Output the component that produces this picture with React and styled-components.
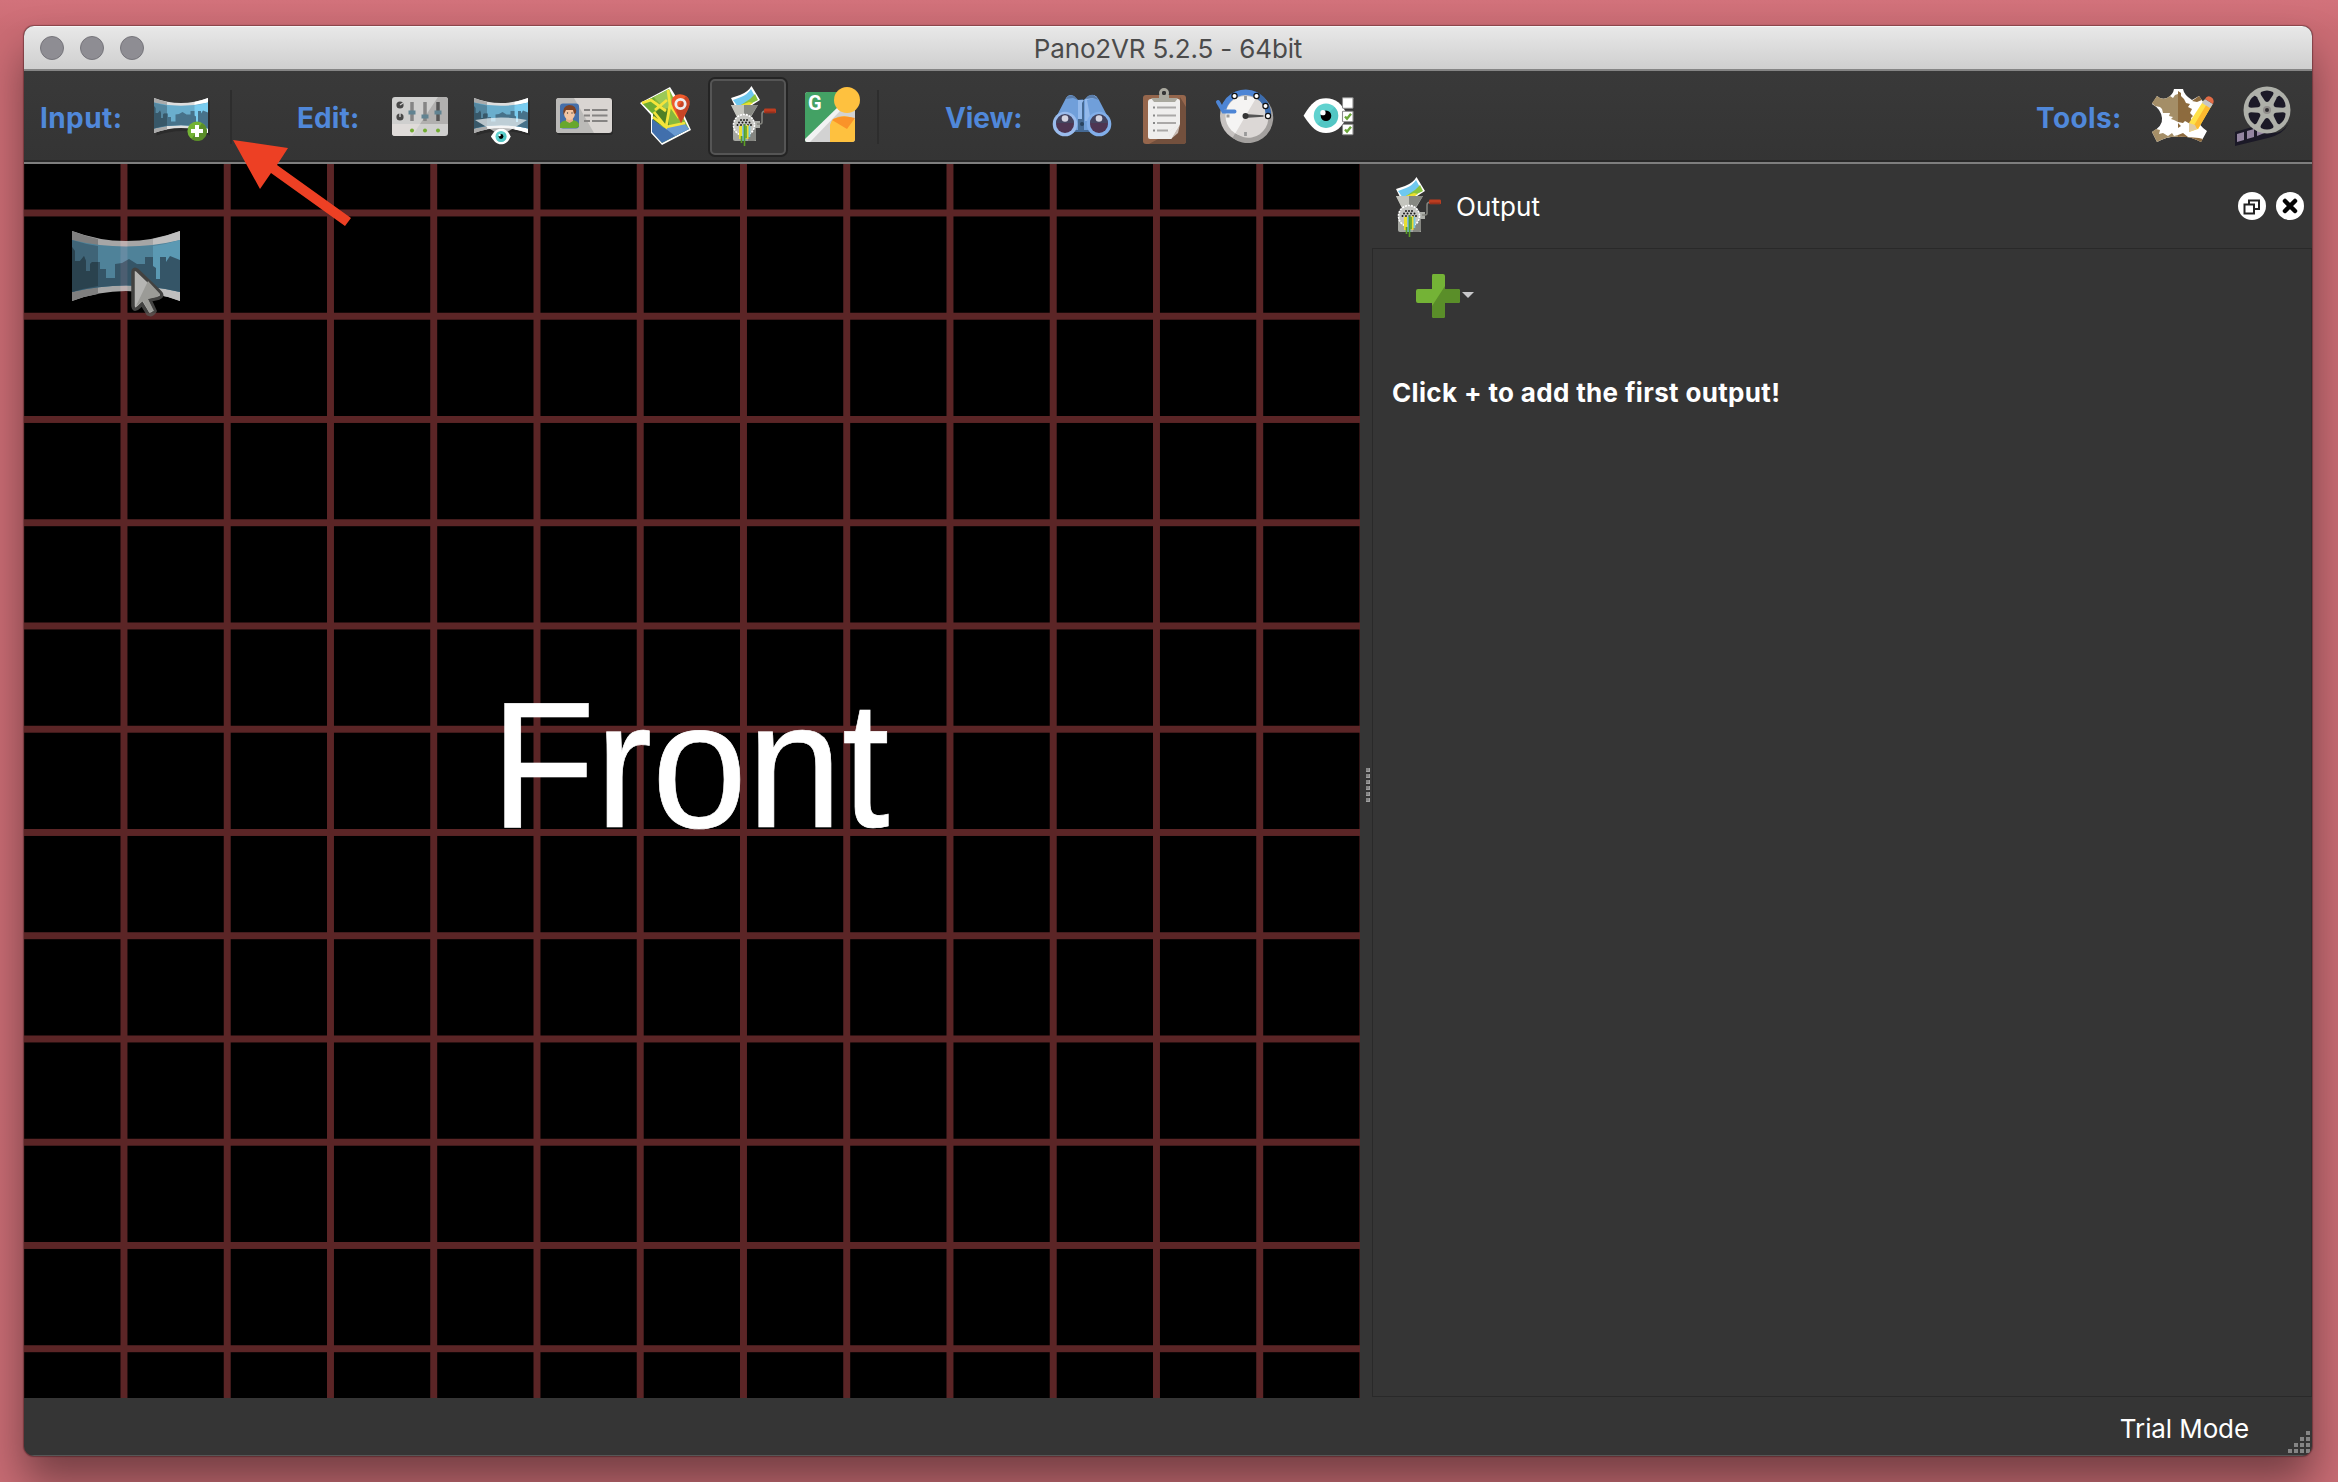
import React from "react";
import styled, { createGlobalStyle } from "styled-components";

const Global = createGlobalStyle`
  * { box-sizing: border-box; }
  body { margin: 0; }
`;

const Desktop = styled.main`
  width: 2338px;
  height: 1482px;
  padding: 26px 26px 26px 24px;
  overflow: hidden;
  background: linear-gradient(180deg, #d2727b 0, #cb6c74 30px, #c86c74 100%);
  font-family: Inter, "Liberation Sans", sans-serif;
  color: #fff;
`;

const Window = styled.div`
  width: 2288px;
  height: 1430px;
  display: flex;
  flex-direction: column;
  overflow: hidden;
  border-radius: 10px;
  background: #353535;
  box-shadow: 0 0 1px 1px rgba(60, 20, 25, 0.45), 0 26px 44px rgba(0, 0, 0, 0.42);
`;

const TitleBar = styled.header`
  height: 45px;
  flex: none;
  display: grid;
  grid-template-columns: 200px 1fr 200px;
  align-items: center;
  background: linear-gradient(#e8e8e8, #cfcfcf);
  border-top: 1px solid #f6f6f6;
  border-bottom: 2px solid #858585;
`;

const Lights = styled.div`
  display: flex;
  gap: 16px;
  padding-left: 16px;
`;

const Light = styled.span`
  width: 24px;
  height: 24px;
  border-radius: 50%;
  background: #8e8d93;
  border: 1px solid #76757b;
`;

const Title = styled.h1`
  margin: 0;
  padding-top: 2px;
  text-align: center;
  font-size: 26px;
  line-height: 32px;
  font-weight: 400;
  letter-spacing: -0.15px;
  color: #4b4b4b;
`;

const Toolbar = styled.nav`
  height: 93px;
  flex: none;
  display: flex;
  align-items: center;
  padding-right: 4px;
  background: linear-gradient(#393939, #343434);
  border-bottom: 2px solid #7e7e7e;
  box-shadow: inset 0 -2px 0 #282828;
`;

const Section = styled.div`
  width: ${(p) => p.$width}px;
  padding-left: ${(p) => p.$pad}px;
  display: flex;
  align-items: center;
`;

const Label = styled.span`
  width: ${(p) => p.$width}px;
  flex: none;
  color: #5088da;
  font-size: 28px;
  font-weight: 700;
  line-height: 34px;
  letter-spacing: ${(p) => p.$track || 0}px;
  padding-top: 3px;
`;

const Tool = styled.button`
  width: 76px;
  height: 76px;
  flex: none;
  margin-right: ${(p) => (p.$tight ? 0 : 6)}px;
  padding: 0 0 4px;
  display: grid;
  place-items: center;
  border-radius: 5px;
  background: ${(p) => (p.$active ? "#393939" : "transparent")};
  border: 2px solid ${(p) => (p.$active ? "#555" : "transparent")};
  box-shadow: ${(p) => (p.$active ? "0 0 0 2px #242424" : "none")};
`;

const Divider = styled.span`
  width: 2px;
  height: 54px;
  background: #2d2d2d;
`;

const Spacer = styled.div`
  flex: 1;
`;

const Body = styled.div`
  height: 1234px;
  flex: none;
  display: flex;
`;

const Viewer = styled.section`
  width: 1336px;
  flex: none;
  position: relative;
  display: flex;
  justify-content: center;
  background-color: #000;
  background-image: linear-gradient(90deg, #5b2526 7px, transparent 7px),
    linear-gradient(#5b2526 7px, transparent 7px);
  background-size: 103.25px 103.25px;
  background-position: 96.5px 45.5px;
`;

const Face = styled.div`
  padding: 501px 3px 0 0;
  font: 400 180px/200px "Liberation Sans", Arial, sans-serif;
  -webkit-text-stroke: 0.7px #fff;
  transform: scaleX(0.949);
  color: #fff;
`;

const PanoCursor = styled.div`
  position: absolute;
  left: 47px;
  top: 66px;
  opacity: 0.75;
`;

const Splitter = styled.div`
  width: 12px;
  flex: none;
  display: flex;
  flex-direction: column;
  justify-content: center;
  align-items: flex-end;
  gap: 2px;
  padding: 8px 2px 0 0;
`;

const SplitDot = styled.span`
  width: 4px;
  height: 4px;
  background: #858585;
  border-right: 1px solid #a0a0a0;
  border-bottom: 1px solid #a0a0a0;
`;

const Panel = styled.aside`
  flex: 1;
  display: flex;
  flex-direction: column;
`;

const PanelHead = styled.div`
  height: 84px;
  flex: none;
  display: flex;
  align-items: center;
  padding: 0 8px 0 9px;
`;

const PanelTitle = styled.h2`
  flex: 1;
  margin: 0 0 0 11px;
  font-size: 26px;
  font-weight: 400;
  letter-spacing: 0.1px;
`;

const RoundButtons = styled.div`
  display: flex;
  gap: 10px;
`;

const PanelBody = styled.div`
  flex: 1;
  margin-bottom: 1px;
  border: 1px solid #292929;
  border-right-color: #2d2d2d;
`;

const AddRow = styled.div`
  display: flex;
  align-items: center;
  gap: 2px;
  padding: 25px 0 0 43px;
`;

const Hint = styled.p`
  margin: 58px 0 0 19px;
  font-size: 26px;
  line-height: 34px;
  font-weight: 700;
  letter-spacing: 0.34px;
`;

const Status = styled.footer`
  flex: 1;
  display: flex;
  justify-content: flex-end;
  align-items: center;
  border-bottom: 1px solid #565656;
`;

const StatusText = styled.span`
  margin-right: 38px;
  padding-top: 3px;
  font-size: 26px;
  letter-spacing: -0.1px;
`;

const Grip = styled.svg`
  width: 24px;
  height: 24px;
  align-self: flex-end;
  margin-right: 1px;
`;

const Pointer = styled.svg`
  position: absolute;
  left: 228px;
  top: 134px;
`;

const dots = (w, rows) => rows.flatMap(([y, xs]) => xs.map((x) => <rect key={x + "-" + y} x={x} y={y} width={w} height={w} />));

function PanoShape({ cone }) {
  return (
    <g>
      <path d="M0 0Q54 20 108 0V70Q54 50 0 70Z" fill="#dedede" />
      <path d="M0 0Q13 5 26 8V63Q13 65 0 70Z" fill="#aaa" />
      <path d="M81 8Q95 5 108 0V70Q95 65 81 63Z" fill="#fff" />
      <path d="M0 9Q54 22 108 9V61Q54 48 0 61Z" fill="#6aaecd" />
      <path d="M0 9Q13 13 26 15V55Q13 57 0 61Z" fill="#54869f" />
      <path d="M81 15Q95 13 108 9V61Q95 57 81 55Z" fill="#7accef" />
      <path d="M0 16L3 20V30H8L12 25L14 30V40H18V33L20 31H28V38H34V47H43V33L50 32L57 28L65 33H73V26H81V35L84 37V48H88V26H94V31L98 25L108 29V61Q54 48 0 61Z" fill="#47728a" />
      <path d="M0 16L3 20V30H8L12 25L14 30V40H18V33L20 31H26V55Q13 57 0 61Z" fill="#385869" />
      {cone && <path d="M2 44Q54 34 106 44L66 68H42Z" fill="#fff" opacity=".65" />}
    </g>
  );
}

const Eye = ({ x, y, r }) => (
  <g transform={`translate(${x} ${y}) scale(${r})`}>
    <path d="M-22 0C-14-13-9-17 0-17S16-12 21 0C16 12 9 17 0 17S-14 12-22 0Z" fill="#fff" />
    <circle r="12" fill="#60d2cf" />
    <path d="M8.5-8.5A12 12 0 1 1-8.5 8.5Z" fill="#43b9b5" opacity=".45" />
    <circle r="5.2" fill="#000" />
    <circle cx="-3" cy="-3" r="2.6" fill="#fff" />
  </g>
);

const PanoAdd = () => (
  <svg width="64" height="64" viewBox="0 0 64 64">
    <g transform="translate(7 15) scale(.5)">
      <path d="M5 5Q56 23 112 5V75Q56 57 5 75Z" fill="#2b2b2b" />
      <PanoShape />
    </g>
    <circle cx="50" cy="48" r="9.6" fill="#73b335" />
    <path d="M55 40A9.6 9.6 0 1 1 44.5 56Z" fill="#5a8d29" />
    <path d="M50 42V54M44 48H56" stroke="#fff" strokeWidth="4" />
  </svg>
);

const Mixer = () => (
  <svg width="64" height="64" viewBox="0 0 64 64">
    <rect x="4" y="14" width="56" height="39" rx="3" fill="#cfcfce" />
    <path d="M50 14H57Q60 14 60 17V41H32Z" fill="#b1b0af" />
    <path d="M4 41H32L24 53H7Q4 53 4 50Z" fill="#dfdbd9" />
    <circle cx="12" cy="22" r="3.6" fill="#484848" /><path d="M12 22L15 20" stroke="#ccc" strokeWidth="1.4" />
    <circle cx="12" cy="34" r="3.6" fill="#484848" /><path d="M12 34V30" stroke="#ccc" strokeWidth="1.4" />
    <path d="M24 19V38M37 19V38" stroke="#858585" strokeWidth="3.5" />
    <path d="M50 19V38" stroke="#555" strokeWidth="3.5" />
    <path d="M20.5 29.5H27.5M33.5 33.5H40.5M46.5 29.5H53.5" stroke="#618391" strokeWidth="4" />
    <g fill="#71ac31"><circle cx="24" cy="47.5" r="2" /><circle cx="37" cy="47.5" r="2" /><circle cx="50" cy="47.5" r="2" /></g>
  </svg>
);

const PanoEye = () => (
  <svg width="64" height="64" viewBox="0 0 64 64">
    <g transform="translate(4 15) scale(.5)">
      <path d="M5 5Q56 23 112 5V75Q56 57 5 75Z" fill="#2b2b2b" />
      <PanoShape cone />
    </g>
    <Eye x={31} y={53.5} r={0.46} />
  </svg>
);

const IdCard = () => (
  <svg width="64" height="64" viewBox="0 0 64 64">
    <rect x="5" y="16" width="56" height="36" rx="3" fill="#292929" />
    <rect x="4" y="15" width="56" height="35" rx="3" fill="#d9d5d2" />
    <path d="M7 15H22L42 50H7Q4 50 4 47V18Q4 15 7 15Z" fill="#bbbab8" />
    <rect x="8" y="20.500" width="19" height="25" rx="3" fill="#456fa9" />
    <path d="M8 45V41Q9 38 15 37H21Q26 38 27 41V43Q26 45 24 45Z" fill="#68a72d" />
    <path d="M14 33H21V38L17.500 40L14 38Z" fill="#e6ac87" />
    <ellipse cx="17.500" cy="30" rx="5.500" ry="7" fill="#f4c5a2" />
    <path d="M11.500 32Q10 23 17 22Q25 22 24 30L22 31L21 27H14L12.500 30Z" fill="#7c4225" />
    <circle cx="15.500" cy="30" r=".7" fill="#444" /><circle cx="20" cy="30" r=".7" fill="#444" />
    <path d="M32 27H38M40 27H55.500M32 32.500H38M40 32.500H55.500M32 38H38M40 38H55.500" stroke="#858382" strokeWidth="2.200" />
  </svg>
);

const MapIcon = () => (
  <svg width="64" height="64" viewBox="-3 0 64 64">
    <path d="M3 20L33 4L38 12L54 47L25 62L14 50V32Z" fill="#fff" />
    <path d="M5 20L32 6L52 46L25 60L16 49V31Z" fill="#88b83c" />
    <path d="M5 20L17 14L21 25L15 30Z" fill="#6fac32" />
    <path d="M16 31L30 20L32 45L16 39Z" fill="#4f7f25" />
    <path d="M17 14L32 6L37 24L28 26Z" fill="#9bc957" />
    <path d="M15 36V49L25 60L52 46L47 40L27 45Z" fill="#416fac" />
    <path d="M28 45L47 40L52 46L38 53Z" fill="#699bd2" />
    <path d="M5 20L14 17L29 28M18 27L30 17M31 7L33 22L29 44L16 34M17 29L29 44L48 40M33 22L42 35" fill="none" stroke="#f4e43b" strokeWidth="2.800" />
    <path d="M44 40L36 25Q32 15 39 12Q44 10 49 13Q55 17 51 26Z" fill="#ef5b2b" />
    <path d="M44 40L51 26Q55 17 49 13L39 27Z" fill="#c74526" />
    <circle cx="43.500" cy="21" r="4.700" fill="none" stroke="#eee" strokeWidth="2.800" />
  </svg>
);

const Grinder = () => (
  <svg width="64" height="64" viewBox="-3 0 64 64">
    <path d="M12 15L21 12Q29 9 32.500 3L41 17L30 24L18 27Z" fill="#fff" />
    <path d="M14 17L22 14Q29 11 32 6L38 17L29 22L19 24Z" fill="#6fc8ef" />
    <path d="M19 24L31 16L36 11L39 17L29 22L20 25Z" fill="#8ac33e" />
    <path d="M19 23L30 19L34 20L28 24H20Z" fill="#eadf32" />
    <path d="M12 22H39L32 34V36H18V34Z" fill="#acaea8" />
    <path d="M12 22H25V34H18Z" fill="#c3c4bd" />
    <path d="M25 22H39L31 34H25Z" fill="#868882" />
    <path d="M14 44V56Q14 58 16 58H37V43Z" fill="#a5a7a1" />
    <path d="M29 50L37 42V57L35 58H29Z" fill="#858681" />
    <path d="M35 38H41V45H35Z" fill="#acaea9" />
    <path d="M38 41H41Q43 41 43 39V31Q43 28 47 28" fill="none" stroke="#858680" strokeWidth="1.500" />
    <rect x="45" y="25.500" width="12" height="4.800" rx="1.200" fill="#bd3d20" /><path d="M46 28.500H56V30H46Z" fill="#96301c" />
    <circle cx="25" cy="42" r="10.500" fill="#c5c6c2" stroke="#fff" strokeWidth="1.600" strokeDasharray="2.100 .9" />
    <g fill="#171717">
      {[[37, [22, 25, 28]], [39.500, [20, 23.500, 27, 30.500]], [42, [18.500, 22, 25.500, 29, 32]]].flatMap(([y, xs]) => xs.map((x) => <circle key={x + "/" + y} cx={x} cy={y} r=".95" />))}
    </g>
    <path d="M21.500 43V56" stroke="#eadf32" strokeWidth="3" /><path d="M25 43V58" stroke="#61b9df" strokeWidth="3" />
    <path d="M30 43V54" stroke="#77c7e4" strokeWidth="2.500" /><path d="M28.500 42V56" stroke="#e9db30" strokeWidth="2" />
    <path d="M25.500 41V63M22.500 53V60" stroke="#5b9f26" strokeWidth="1.600" /><path d="M27 43V55" stroke="#68aa2c" strokeWidth="1.800" />
  </svg>
);

const GLetter = styled.text`
  font: 700 20px Roboto, sans-serif;
  fill: #fff;
`;

const StreetView = () => (
  <svg width="64" height="64" viewBox="-3 0 64 64">
    <rect x="4" y="9" width="50" height="50" rx="3" fill="#c8c8c8" />
    <path d="M7 9H54L4 59V12Q4 9 7 9Z" fill="#43a164" />
    <path d="M38 25L5 58L9 59H29V42Q30 36 38 33L54 37V20Z" fill="#d2d2d2" />
    <path d="M4 56L39 22L41 26L9 59H6Q4 59 4 57Z" fill="#f2f2f2" />
    <path d="M29 59V42Q30 34 43 33Q53 34 54 37V56Q54 59 51 59Z" fill="#fec13f" />
    <path d="M31 37Q40 31 54 35L46 46Z" fill="#fa9329" />
    <circle cx="46" cy="17" r="13" fill="#fec13f" />
    <GLetter x="7" y="27">G</GLetter>
  </svg>
);

const Binoculars = () => (
  <svg width="64" height="64" viewBox="0 0 64 64">
    <path d="M27 17L33 16L47 49H20Z" fill="#456993" />
    <path d="M3 40L15 17Q18 10 24 13L28 17V47H4Z" fill="#709fda" />
    <path d="M61 40L49 17Q45 10 38 13L34 17V47H60Z" fill="#709fda" />
    <path d="M32 20V36H28V17H35V38H41L37 17L47 14L44 12L34 17Z" fill="#93b9eb" />
    <path d="M16 16Q18 11 24 13L28 17L23 15ZM36 16Q39 11 44 12L49 17L43 15Z" fill="#5b7da9" />
    <circle cx="15" cy="41" r="12.300" fill="#9abced" /><circle cx="49" cy="41" r="12.300" fill="#81aee9" />
    <circle cx="15" cy="41" r="9" fill="#4e3552" /><circle cx="49" cy="41" r="9" fill="#4e3552" />
    <path d="M6 40A9 9 0 0 1 24 40M40 40A9 9 0 0 1 58 40" fill="#44445f" />
    <circle cx="15" cy="35.500" r="3.300" fill="#d4d4e1" /><circle cx="49" cy="35.500" r="3.300" fill="#d4d4e1" />
    <circle cx="32" cy="41" r="2" fill="#29435f" />
  </svg>
);

const Clipboard = () => (
  <svg width="64" height="64" viewBox="0 0 64 64">
    <rect x="11" y="12" width="43" height="49" rx="3" fill="#95664c" />
    <path d="M48 14L54 24V58Q54 61 51 61H17L46 45Z" fill="#73503d" />
    <path d="M19 16H46Q48 16 48 18V41L39 56H18Q16 56 16 54V19Q16 16 19 16Z" fill="#efeeed" />
    <path d="M48 41L39 56L36 49Z" fill="#d5d2d0" /><path d="M36 49L48 41L46 50L39 56Z" fill="#fff" opacity=".6" />
    <path d="M19 15H46L43 19H22Z" fill="#aaa99f" />
    <circle cx="32" cy="10" r="3.500" fill="none" stroke="#aaa99f" strokeWidth="3" /><path d="M27 12V17H37V12" fill="#aaa99f" /><circle cx="32" cy="10" r="2" fill="#353535" />
    <path d="M25 24.500H44M25 32.500H44M25 40H44M25 47.500H36" stroke="#aaa8a7" strokeWidth="2" />
    <path d="M21 24.500H23M21 32.500H23M21 40H23M21 47.500H23" stroke="#888" strokeWidth="2" />
  </svg>
);

const Clock = () => (
  <svg width="64" height="64" viewBox="1.5 1 64 64">
    <circle cx="33" cy="34" r="25.500" fill="#c6c2c0" />
    <path d="M45 12A25.500 25.500 0 1 1 20 56Z" fill="#a3a09e" />
    <circle cx="33" cy="34" r="20" fill="#f5f4f3" />
    <path d="M43 17A20 20 0 1 1 23 51Z" fill="#dcd8d6" />
    <path d="M11 27A23 23 0 0 1 44 13" fill="none" stroke="#4d85d5" strokeWidth="5.500" />
    <path d="M44 13A23 23 0 0 1 56 34" fill="none" stroke="#3c6cad" strokeWidth="5.500" />
    <path d="M5.500 20L11 29.500H22" fill="none" stroke="#4d85d5" strokeWidth="4" strokeLinecap="round" />
    <path d="M33 14V18M33 50V54M14 34H17" stroke="#999" strokeWidth="2.800" />
    <path d="M32 32L51 33.300V34.700L32 36Z" fill="#555" /><circle cx="33" cy="34" r="3" fill="#353535" />
    {[[22, 14], [44, 14], [53, 24], [55.500, 34]].map(([x, y]) => <circle key={x} cx={x} cy={y} r="2.600" fill="#fff" stroke="#111" strokeWidth="1.200" />)}
  </svg>
);

const EyeList = () => (
  <svg width="64" height="64" viewBox="1.5 0 64 64">
    <Eye x={31.500} y={32.700} r={1.020} />
    {[20, 33.500, 46.500].map((y, i) => (
      <g key={y}>
        <rect x="48" y={y - 5.300} width="10.500" height="10.500" rx=".6" fill="#fff" stroke="#8b8b8b" strokeWidth="1.100" />
        {i > 0 && <path d={`M50.500 ${y}L52.500 ${y + 2.200}L56.500 ${y - 2.800}`} fill="none" stroke="#6aa639" strokeWidth="2.400" />}
      </g>
    ))}
  </svg>
);

const Hide = () => (
  <svg width="64" height="64" viewBox="2 0 64 64">
    <path d="M26 6H35Q36 12 44 17L51 13L58 23Q49 28 49 35Q51 43 59 48L53 59Q42 53 31 54Q20 53 9 59L4 49Q15 43 14 35Q13 26 4 21L9 13Q13 17 19 15Q25 12 26 6Z" fill="#fff" />
    <path d="M30 11V39L26 37L23 36L25 34L21 33L22 30L15 30L14 26L12 24L7 23L4 20L9 13Q13 17 19 15L22 13L25 15L27 12Z" fill="#a48e67" />
    <path d="M30 6V39L35 40L37 38L44 42L43 35L45 33L42 30L44 26L40 24L42 21L38 20L36 16L33 13V10L30 8ZM44 18L51 13L54 17L49 19Z" fill="#8d6b3e" />
    <path d="M8 46L4 49L9 59Q20 53 30 54V52L26 53L24 50L20 53L15 50L11 51L12 47Z" fill="#a48e67" />
    <path d="M30 40L33 43L30 45ZM30 52L35 50L40 54L51 55L55 56L53 59Q42 53 30 54Z" fill="#8d6b3e" />
    <path d="M41 40L56 17L64 22L50 46L41 49Z" fill="#ffe149" />
    <path d="M45 44L60 19L64 22L50 46Z" fill="#fdb92f" />
    <path d="M41 40L41 49L49 46L47 42Z" fill="#dfcaa2" />
    <path d="M54 20L57 16L65 21L62 25Z" fill="#c7c6c5" />
    <path d="M57 16Q59 12 63 14Q67 16 65 21Z" fill="#e36b45" />
  </svg>
);

const Reel = () => (
  <svg width="68" height="68" viewBox="0 0 68 68">
    <path d="M5 51L29 44L44 52Q52 52 58 43Q54 53 38 57L5 65Z" fill="#1b1927" />
    <path d="M7 53L14 51V59L7 61ZM17 50L24 48V56L17 58ZM27 48L37 48V51L27 55Z" fill="#9485a1" />
    <circle cx="37" cy="29" r="23.500" fill="#aeb0a9" />
    {[0, 60, 120, 180, 240, 300].map((a) => <path key={a} transform={`rotate(${a} 37 29)`} d="M31 11Q37 8 43 11Q44 12 43 14L39 20Q37 22 35 20L31 14Q30 12 31 11Z" fill="#1b1927" />)}
    <circle cx="37" cy="29" r="4" fill="#918e8c" /><circle cx="37" cy="29" r="2" fill="#302d32" />
  </svg>
);

const App = () => (
  <Desktop>
    <Global />
    <Window>
      <TitleBar>
        <Lights><Light /><Light /><Light /></Lights>
        <Title>Pano2VR 5.2.5 - 64bit</Title>
      </TitleBar>
      <Toolbar>
        <Section $width={206} $pad={16}>
          <Label $width={100.5} $track={0.4}>Input:</Label>
          <Tool $tight><PanoAdd /></Tool>
        </Section>
        <Divider />
        <Section $width={645} $pad={65}>
          <Label $width={85} $track={0.1}>Edit:</Label>
          <Tool><Mixer /></Tool>
          <Tool><PanoEye /></Tool>
          <Tool><IdCard /></Tool>
          <Tool><MapIcon /></Tool>
          <Tool $active><Grinder /></Tool>
          <Tool $tight><StreetView /></Tool>
        </Section>
        <Divider />
        <Section $width={560} $pad={66}>
          <Label $width={99} $track={-0.1}>View:</Label>
          <Tool><Binoculars /></Tool>
          <Tool><Clipboard /></Tool>
          <Tool><Clock /></Tool>
          <Tool $tight><EyeList /></Tool>
        </Section>
        <Spacer />
        <Label $width={108} $track={0.4}>Tools:</Label>
        <Tool><Hide /></Tool>
        <Tool><Reel /></Tool>
      </Toolbar>
      <Body>
        <Viewer>
          <Face>Front</Face>
          <PanoCursor>
            <svg width="112" height="88" viewBox="0 0 112 88">
              <g transform="translate(1 1)"><PanoShape /></g>
              <path d="M62 42V76Q63 82 68 77L71 74L77 84Q81 86 84 81L79 70L88 68Q93 66 89 62L66 40Q62 38 62 42Z" fill="#f2f2ef" stroke="#595957" strokeWidth="3.500" />
              <path d="M77 51L89 64L86 67L77 69L83 81L78 82L72 71L65 76Z" fill="#cfcfca" />
            </svg>
          </PanoCursor>
        </Viewer>
        <Splitter>
          {[0, 1, 2, 3, 4, 5].map((n) => <SplitDot key={n} />)}
        </Splitter>
        <Panel>
          <PanelHead>
            <Grinder />
            <PanelTitle>Output</PanelTitle>
            <RoundButtons>
              <svg width="28" height="28" viewBox="0 0 28 28"><circle cx="14" cy="14" r="14" fill="#fff" /><path d="M11 12V8.500H21V17H17M6.500 12.500H16V21.500H6.500Z" fill="none" stroke="#222" strokeWidth="2" /></svg>
              <svg width="28" height="28" viewBox="0 0 28 28"><circle cx="14" cy="14" r="14" fill="#fff" /><path d="M9 9L19 19M19 9L9 19" stroke="#050505" strokeWidth="4.500" strokeLinecap="round" /></svg>
            </RoundButtons>
          </PanelHead>
          <PanelBody>
            <AddRow>
              <svg width="44" height="44" viewBox="0 0 44 44">
                <path d="M17 0H27Q29 0 29 2V15H42Q44 15 44 17V27Q44 29 42 29H29V42Q29 44 27 44H18Q16 44 16 42V29H2Q0 29 0 27V17Q0 15 2 15H16V2Q16 0 17 0Z" fill="#74b336" />
                <path d="M29 12V15H42Q44 15 44 17V27Q44 29 42 29H29V42Q29 44 27 44H18Q16 44 16 42V32Z" fill="#5a8e29" />
              </svg>
              <svg width="12" height="8"><path d="M0 0H12L6 6Z" fill="#c8c8ca" /></svg>
            </AddRow>
            <Hint>Click + to add the first output!</Hint>
          </PanelBody>
        </Panel>
      </Body>
      <Status>
        <StatusText>Trial Mode</StatusText>
        <Grip fill="#858585">{dots(4, [[0, [19]], [6, [13, 19]], [12, [7, 13, 19]], [18, [1, 7, 13, 19]]])}</Grip>
      </Status>
    </Window>
    <Pointer width="128" height="96" viewBox="0 0 128 96"><path d="M5 6L60 14L49 31L123 84L117 92L43 39L32 55Z" fill="#ed4024" /></Pointer>
  </Desktop>
);

export default App;
